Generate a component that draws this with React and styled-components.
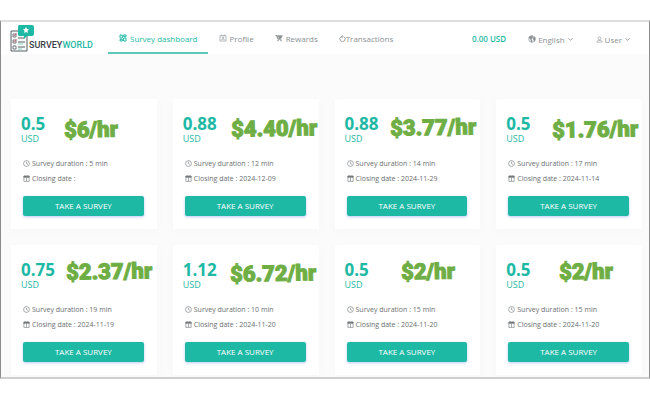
import React from "react";
import styled, { createGlobalStyle } from "styled-components";

const teal = "#1eb9a5";

const GlobalStyle = createGlobalStyle`
  * { box-sizing: border-box; }
  body {
    margin: 0;
    background: #fff;
    color: #6b6f72;
    font-family: "Open Sans", "Noto Sans", sans-serif;
    font-size: 7px;
  }
`;

const Frame = styled.div`
  margin: 20px 0;
  height: calc(100vh - 41px);
  overflow: hidden;
  background: #fbfbfb;
  border: 1px solid #8b8b8b;
  border-top: 2px solid #dedede;
  border-bottom: 2px solid #cfcfcf;
`;

const Header = styled.header`
  display: flex;
  align-items: stretch;
  height: 32px;
  padding: 0 18px 0 8px;
  background: #fff;
`;

const Brand = styled.a`
  display: flex;
  align-items: flex-end;
  width: 99px;
  color: #3b4144;
  text-decoration: none;
  font: 500 9px/16px "Roboto", sans-serif;

  svg { flex: none; width: 26px; height: 29px; align-self: center; }
  b { color: ${teal}; font-weight: 500; }
  > span { margin: 0 0 1px -6px; }
`;

const Nav = styled.nav`
  display: flex;
  flex: 1;
`;

const NavLink = styled.a`
  display: flex;
  align-items: center;
  gap: ${(p) => (p.$tight ? 0 : 3)}px;
  padding: 0 10px 0 11px;
  font-size: 8px;
  text-decoration: none;
  white-space: nowrap;
  font-weight: ${(p) => (p.$active ? 500 : 400)};
  color: ${(p) => (p.$active ? teal : "#8c9194")};
  border-top: 2px solid transparent;
  border-bottom: 2px solid ${(p) => (p.$active ? "#5cc9b8" : "transparent")};
`;

const Account = styled.div`
  display: flex;
  align-items: center;
  gap: 22px;
`;

const Balance = styled.span`
  color: ${teal};
  font-size: 8px;
  font-weight: 600;
`;

const MenuButton = styled.button`
  display: flex;
  align-items: center;
  gap: 2px;
  padding: 2px 0 0;
  border: 0;
  background: none;
  color: #8c9194;
  font: inherit;
  font-size: 8px;
`;

const Cards = styled.main`
  display: grid;
  grid-template-columns: repeat(4, 1fr);
  gap: 16px;
  padding: 45px 7px 16px 10px;
`;

const Card = styled.article`
  position: relative;
  display: flex;
  flex-direction: column;
  height: 130px;
  padding: 15px 13px 13px 10px;
  background: #fff;
  box-shadow: 0 2px 10px rgba(0, 0, 0, 0.025);
`;

const Amount = styled.strong`
  align-self: flex-start;
  color: ${teal};
  font-size: 17px;
  line-height: 20px;
  font-weight: 700;
`;

const Currency = styled.span`
  align-self: flex-start;
  color: ${teal};
  font-size: 9px;
  line-height: 9px;
`;

const HourlyRate = styled.span`
  position: absolute;
  left: ${(p) => p.$x}px;
  top: ${(p) => p.$y}px;
  color: #6fae45;
  font: 900 22px/28px "Roboto", "Liberation Sans", sans-serif;
  -webkit-text-stroke: 1px #6fae45;
  white-space: nowrap;
  transform: rotate(-1deg);
`;

const Details = styled.div`
  display: flex;
  flex-direction: column;
  margin: 13px 0 0 2px;
`;

const Detail = styled.span`
  display: flex;
  align-items: center;
  gap: 2px;
  height: 15px;
  white-space: nowrap;
`;

const SurveyButton = styled.button`
  height: 20px;
  margin: auto 0 0 2px;
  padding: 0 0 2px;
  border: 0;
  border-radius: 2px;
  background: ${teal};
  box-shadow: 0 1px 3px rgba(70, 100, 220, 0.35);
  color: #fff;
  font: inherit;
  font-size: 8px;
`;

const Glyph = styled.svg`
  flex: none;
  width: ${(p) => p.$size || 8}px;
  height: ${(p) => p.$size || 8}px;
  fill: none;
  stroke: currentColor;
  stroke-width: 2;
`;

const Icon = ({ children, size }) => (
  <Glyph viewBox="0 0 24 24" $size={size} aria-hidden="true">{children}</Glyph>
);

const DashboardIcon = () => (
  <Icon><path d="M3 3h7v9H3zM14 3h7v5h-7zM14 12h7v9h-7zM3 16h7v5H3z" strokeWidth="3" /></Icon>
);
const ProfileIcon = () => (
  <Icon>
    <path d="M3 5h18v16H3zM8 2v4M16 2v4M8 18c0-5 8-5 8 0" />
    <circle cx="12" cy="11" r="2" />
  </Icon>
);
const CartIcon = () => (
  <Icon>
    <path d="M1 4h4l4 12h10M5 5h17l-4 8H8z" fill="currentColor" />
    <circle cx="9" cy="20" r="1.5" /><circle cx="18" cy="20" r="1.5" />
  </Icon>
);
const RefreshIcon = () => (
  <Icon size={7}><path d="M7 6a9 9 0 1 0 10 0M12 2L8 6l4 4M8 6h7" strokeWidth="3" /></Icon>
);
const GlobeIcon = () => (
  <Icon>
    <circle cx="12" cy="12" r="10" />
    <path d="M3 8l6 6v6l3 1v-5l-3-3 4-4V3L6 4zM15 8l6-1v9l-3 1-2-4z" fill="currentColor" />
  </Icon>
);
const UserIcon = () => (
  <Icon size={7}><circle cx="12" cy="8" r="5" /><path d="M3 21v-2q1-4 6-4h6q5 0 6 4v2z" /></Icon>
);
const ChevronIcon = () => <Icon size={7}><path d="M5 8l7 7 7-7" strokeWidth="3" /></Icon>;
const ClockIcon = () => <Icon size={7}><circle cx="12" cy="12" r="10" /><path d="M12 6v6l5 3" /></Icon>;
const CalendarIcon = () => (
  <Icon size={7}>
    <path d="M3 4h18v18H3zM12 9v12" />
    <path d="M3 4h18v4H3zM7 1v4M17 1v4" fill="currentColor" />
  </Icon>
);

const Logo = () => (
  <svg viewBox="0 0 26 29" fill="none" aria-hidden="true">
    <path d="M2 7h16v20H2z" fill="#f7f8f8" stroke="#596064" />
    <path d="M4 10h3v3H4zM4 16h3v3H4zM4 22h3v3H4z" stroke="#596064" strokeWidth=".8" />
    <path d="M4.500 11l1 1 2-3M4.500 17l1 1 2-3" stroke="#d15670" strokeWidth=".8" />
    <path d="M9 14h6M9 18h7M9 23h7" stroke="#596064" />
    <path d="M9 20h5M9 25h4" stroke="#8ad6ca" />
    <path d="M10 1h13q2 0 2 2v7q0 2-2 2h-5l-3 3v-3h-5q-1 0-1-2V3q0-2 1-2z" fill={teal} />
    <path d="M17 3l1 2 2 .3-1.500 1.500.4 2.200-1.900-1-1.900 1 .4-2.200L14 5.300l2-.3z" fill="#fff" />
  </svg>
);

const surveys = [
  { amount: "0.5", rate: "$6/hr", x: 53, y: 17, minutes: 5, closing: "" },
  { amount: "0.88", rate: "$4.40/hr", x: 58, y: 16, minutes: 12, closing: "2024-12-09" },
  { amount: "0.88", rate: "$3.77/hr", x: 55, y: 15, minutes: 14, closing: "2024-11-29" },
  { amount: "0.5", rate: "$1.76/hr", x: 56, y: 17, minutes: 17, closing: "2024-11-14" },
  { amount: "0.75", rate: "$2.37/hr", x: 55, y: 13, minutes: 19, closing: "2024-11-19" },
  { amount: "1.12", rate: "$6.72/hr", x: 57, y: 15, minutes: 10, closing: "2024-11-20" },
  { amount: "0.5", rate: "$2/hr", x: 66, y: 13, minutes: 15, closing: "2024-11-20" },
  { amount: "0.5", rate: "$2/hr", x: 63, y: 13, minutes: 15, closing: "2024-11-20" },
];

const SurveyCard = ({ survey }) => (
  <Card>
    <Amount>{survey.amount}</Amount>
    <Currency>USD</Currency>
    <HourlyRate $x={survey.x} $y={survey.y}>{survey.rate}</HourlyRate>
    <Details>
      <Detail><ClockIcon /><span>Survey duration : {survey.minutes} min</span></Detail>
      <Detail><CalendarIcon /><span>Closing date : {survey.closing}</span></Detail>
    </Details>
    <SurveyButton type="button">TAKE A SURVEY</SurveyButton>
  </Card>
);

export default function App() {
  return (
    <>
      <GlobalStyle />
      <Frame>
        <Header>
          <Brand href="#home"><Logo /><span>SURVEY<b>WORLD</b></span></Brand>
          <Nav>
            <NavLink href="#dashboard" $active><DashboardIcon />Survey dashboard</NavLink>
            <NavLink href="#profile"><ProfileIcon />Profile</NavLink>
            <NavLink href="#rewards"><CartIcon />Rewards</NavLink>
            <NavLink href="#transactions" $tight><RefreshIcon />Transactions</NavLink>
          </Nav>
          <Account>
            <Balance>0.00 USD</Balance>
            <MenuButton type="button"><GlobeIcon />English<ChevronIcon /></MenuButton>
            <MenuButton type="button"><UserIcon />User<ChevronIcon /></MenuButton>
          </Account>
        </Header>
        <Cards>
          {surveys.map((survey, i) => <SurveyCard key={i} survey={survey} />)}
        </Cards>
      </Frame>
    </>
  );
}
